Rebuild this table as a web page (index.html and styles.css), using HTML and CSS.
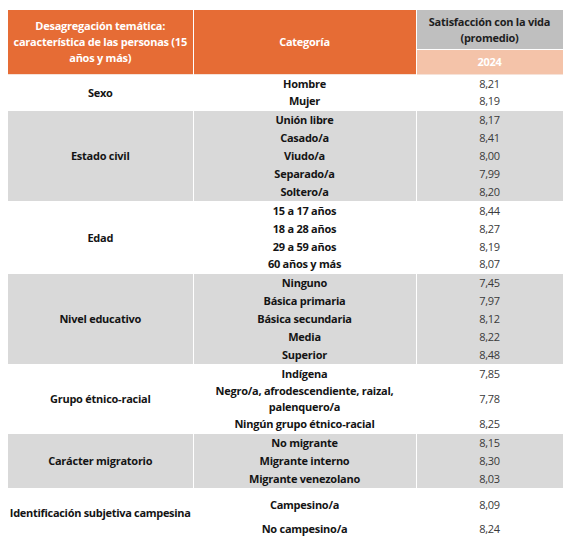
FILE: index.html
```html
<!DOCTYPE html>
<html lang="es">
<head>
<meta charset="utf-8">
<title>Satisfacción con la vida</title>
<link rel="stylesheet" href="styles.css">
</head>
<body>
<table class="tbl">
  <colgroup>
    <col class="c1"><col class="c2"><col class="c3">
  </colgroup>
  <thead>
    <tr class="h1">
      <th rowspan="2" class="orange">Desagregación temática:<br>característica de las personas (15<br>años y más)</th>
      <th rowspan="2" class="orange">Categoría</th>
      <th class="grayhead">Satisfacción con la vida<br>(promedio)</th>
    </tr>
    <tr class="h2">
      <th class="peach">2024</th>
    </tr>
  </thead>
  <tbody class="white">
    <tr class="r"><td rowspan="2" class="grp">Sexo</td><td class="cat">Hombre</td><td class="val">8,21</td></tr>
    <tr class="r"><td class="cat">Mujer</td><td class="val">8,19</td></tr>
  </tbody>
  <tbody class="gray">
    <tr class="r"><td rowspan="5" class="grp">Estado civil</td><td class="cat">Unión libre</td><td class="val">8,17</td></tr>
    <tr class="r"><td class="cat">Casado/a</td><td class="val">8,41</td></tr>
    <tr class="r"><td class="cat">Viudo/a</td><td class="val">8,00</td></tr>
    <tr class="r"><td class="cat">Separado/a</td><td class="val">7,99</td></tr>
    <tr class="r r19"><td class="cat">Soltero/a</td><td class="val">8,20</td></tr>
  </tbody>
  <tbody class="white">
    <tr class="r"><td rowspan="4" class="grp">Edad</td><td class="cat">15 a 17 años</td><td class="val">8,44</td></tr>
    <tr class="r"><td class="cat">18 a 28 años</td><td class="val">8,27</td></tr>
    <tr class="r"><td class="cat">29 a 59 años</td><td class="val">8,19</td></tr>
    <tr class="r"><td class="cat">60 años y más</td><td class="val">8,07</td></tr>
  </tbody>
  <tbody class="gray">
    <tr class="r"><td rowspan="5" class="grp">Nivel educativo</td><td class="cat">Ninguno</td><td class="val">7,45</td></tr>
    <tr class="r"><td class="cat">Básica primaria</td><td class="val">7,97</td></tr>
    <tr class="r"><td class="cat">Básica secundaria</td><td class="val">8,12</td></tr>
    <tr class="r"><td class="cat">Media</td><td class="val">8,22</td></tr>
    <tr class="r r19"><td class="cat">Superior</td><td class="val">8,48</td></tr>
  </tbody>
  <tbody class="white">
    <tr class="r"><td rowspan="3" class="grp">Grupo étnico-racial</td><td class="cat">Indígena</td><td class="val">7,85</td></tr>
    <tr class="r r33"><td class="cat">Negro/a, afrodescendiente, raizal,<br>palenquero/a</td><td class="val">7,78</td></tr>
    <tr class="r"><td class="cat">Ningún grupo étnico-racial</td><td class="val">8,25</td></tr>
  </tbody>
  <tbody class="gray">
    <tr class="r"><td rowspan="3" class="grp">Carácter migratorio</td><td class="cat">No migrante</td><td class="val">8,15</td></tr>
    <tr class="r"><td class="cat">Migrante interno</td><td class="val">8,30</td></tr>
    <tr class="r r19"><td class="cat">Migrante venezolano</td><td class="val">8,03</td></tr>
  </tbody>
  <tbody class="white">
    <tr class="r r24"><td rowspan="2" class="grp nowrap">Identificación subjetiva campesina</td><td class="cat bot">Campesino/a</td><td class="val bot">8,09</td></tr>
    <tr class="r r24"><td class="cat bot">No campesino/a</td><td class="val bot">8,24</td></tr>
  </tbody>
</table>
</body>
</html>
```

FILE: styles.css
```css
html, body {
  margin: 0;
  padding: 0;
  background: #ffffff;
}
body {
  padding: 10px 8px 0 8px;
  font-family: "Open Sans", "Noto Sans", "Liberation Sans", sans-serif;
  font-size: 11px;
  letter-spacing: -0.25px;
}
.tbl {
  border-collapse: collapse;
  table-layout: fixed;
  width: 555px;
}
.c1 { width: 185px; }
.c2 { width: 223px; }
.c3 { width: 147px; }
.tbl th, .tbl td {
  padding: 0 4px;
  text-align: center;
  vertical-align: middle;
  line-height: 16px;
  border-left: 1px solid #ffffff;
  border-right: 1px solid #ffffff;
}
.tbl th:first-child, .tbl td.grp { border-left: none; }
.tbl th { font-weight: 700; }
.orange {
  background: #e66c35;
  color: #ffffff;
}
.grayhead {
  background: #bfbfbf;
  color: #1e1e1e;
  height: 39px;
  border-bottom: 1px solid #ffffff;
}
.peach {
  background: #f4c3a9;
  color: #ffffff;
  height: 24px;
}
.h1 { height: 39px; }
.h2 { height: 24px; }
thead { border-bottom: 1px solid #f6e2d8; }
.gray td { background: #d9d9d9; }
.white td { background: #ffffff; }
tbody { border-top: 1px solid #ffffff; }
.r { height: 18px; }
.r19 { height: 19px; }
.r33 { height: 33px; }
.r24 { height: 24px; }
.grp {
  font-weight: 700;
  color: #141414;
}
.tbl td.nowrap {
  white-space: nowrap;
  padding: 0;
  letter-spacing: -0.3px;
}
.cat {
  font-weight: 700;
  color: #141414;
}
.val {
  font-weight: 400;
  color: #3a3a3a;
}
.tbl td.bot { vertical-align: bottom; padding-bottom: 0; }
```
